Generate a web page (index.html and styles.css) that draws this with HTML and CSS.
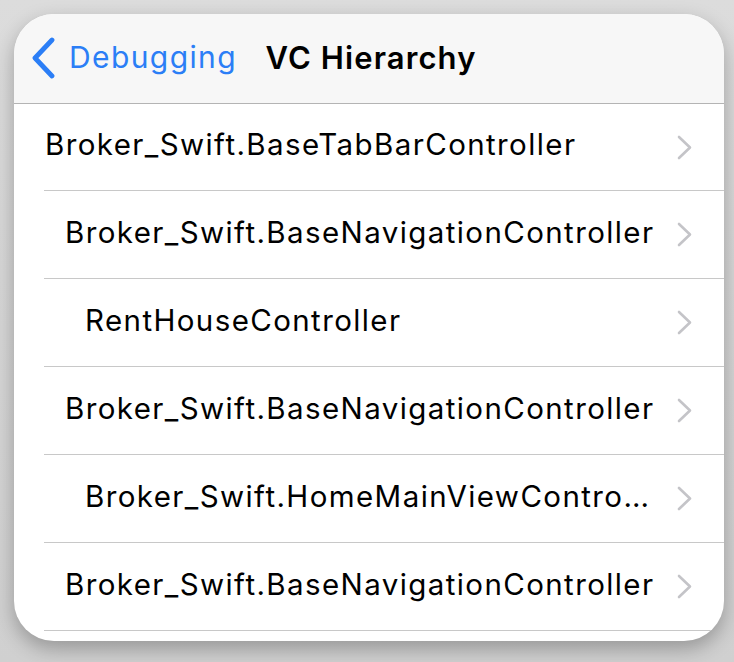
FILE: index.html
```html
<!DOCTYPE html>
<html>
<head>
<meta charset="utf-8">
<link rel="stylesheet" href="styles.css">
</head>
<body>
<div class="card">
  <header class="nav">
    <div class="back">
      <svg class="back-icon" width="25" height="42" viewBox="0 0 25 42"><polyline points="21,3 4,21 21,39" fill="none" stroke="currentColor" stroke-width="4.8" stroke-linecap="round" stroke-linejoin="round"/></svg>
      <span class="back-label">Debugging</span>
    </div>
    <h1 class="title">VC Hierarchy</h1>
  </header>
  <ul class="list">
    <li class="row first lvl0"><span class="label">Broker_Swift.BaseTabBarController</span><svg class="chev" width="17" height="25" viewBox="0 0 17 25"><polyline points="3,2 14,12.5 3,23" fill="none" stroke="currentColor" stroke-width="2.6" stroke-linecap="round" stroke-linejoin="round"/></svg></li>
    <li class="row lvl1"><span class="label">Broker_Swift.BaseNavigationController</span><svg class="chev" width="17" height="25" viewBox="0 0 17 25"><polyline points="3,2 14,12.5 3,23" fill="none" stroke="currentColor" stroke-width="2.6" stroke-linecap="round" stroke-linejoin="round"/></svg></li>
    <li class="row lvl2"><span class="label">RentHouseController</span><svg class="chev" width="17" height="25" viewBox="0 0 17 25"><polyline points="3,2 14,12.5 3,23" fill="none" stroke="currentColor" stroke-width="2.6" stroke-linecap="round" stroke-linejoin="round"/></svg></li>
    <li class="row lvl1"><span class="label">Broker_Swift.BaseNavigationController</span><svg class="chev" width="17" height="25" viewBox="0 0 17 25"><polyline points="3,2 14,12.5 3,23" fill="none" stroke="currentColor" stroke-width="2.6" stroke-linecap="round" stroke-linejoin="round"/></svg></li>
    <li class="row lvl2"><span class="label">Broker_Swift.HomeMainViewContro…</span><svg class="chev" width="17" height="25" viewBox="0 0 17 25"><polyline points="3,2 14,12.5 3,23" fill="none" stroke="currentColor" stroke-width="2.6" stroke-linecap="round" stroke-linejoin="round"/></svg></li>
    <li class="row lvl1"><span class="label">Broker_Swift.BaseNavigationController</span><svg class="chev" width="17" height="25" viewBox="0 0 17 25"><polyline points="3,2 14,12.5 3,23" fill="none" stroke="currentColor" stroke-width="2.6" stroke-linecap="round" stroke-linejoin="round"/></svg></li>
  </ul>
</div>
</body>
</html>
```
FILE: styles.css
```css
html, body {
  margin: 0;
  padding: 0;
}
body {
  width: 734px;
  height: 662px;
  background: linear-gradient(#dcdcdc, #d0d0d0);
  font-family: Inter, "Noto Sans", sans-serif;
  overflow: hidden;
  padding-top: 14px;
  padding-left: 14px;
  box-sizing: border-box;
}
.card {
  width: 710px;
  height: 627px;
  background: #fff;
  border-radius: 40px;
  overflow: hidden;
  box-shadow: 0 8px 20px rgba(0, 0, 0, 0.28);
}
.nav {
  height: 89px;
  background: #f7f7f7;
  border-bottom: 1px solid #b4b4b4;
  display: flex;
  align-items: center;
  justify-content: center;
  position: relative;
}
.back {
  position: absolute;
  left: 17px;
  top: 23px;
  display: flex;
  align-items: center;
  gap: 13px;
  color: #2b7ef6;
}
.back-icon {
  display: block;
}
.back-label {
  font-size: 30px;
  letter-spacing: 1.4px;
  line-height: 1;
  margin-top: -3px;
}
.title {
  margin: 0 0 0 4px;
  font-size: 31px;
  font-weight: 600;
  letter-spacing: 1.1px;
  line-height: 1;
  color: #000;
  margin-top: -3px;
}
.list {
  list-style: none;
  margin: 0;
  padding: 0;
}
.row {
  height: 87px;
  border-bottom: 1px solid #c8c8c8;
  margin-left: 30px;
  padding-right: 31px;
  display: flex;
  align-items: center;
  justify-content: space-between;
  color: #000;
  font-size: 29.5px;
  letter-spacing: 1.4px;
}
.row.first {
  height: 86px;
}
.lvl0 { padding-left: 1px; }
.lvl1 { padding-left: 21px; }
.lvl2 { padding-left: 41px; }
.label {
  white-space: nowrap;
  min-width: 0;
  flex: 1;
  line-height: 1;
  margin-top: -4px;
}
.chev {
  flex: none;
  color: #c4c4c8;
  display: block;
}
```
